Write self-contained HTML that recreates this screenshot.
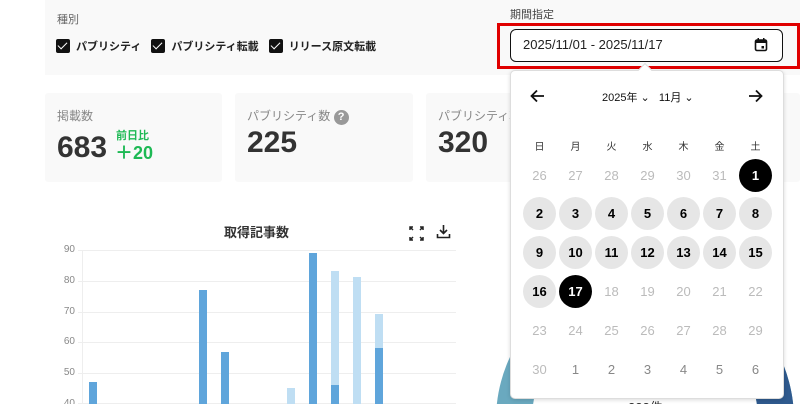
<!DOCTYPE html><html><head><meta charset="utf-8"><style>
html,body{margin:0;width:800px;height:404px;overflow:hidden}
body{background:#fff;font-family:"Liberation Sans","Noto Sans CJK JP",sans-serif;position:relative}
.a{position:absolute}
.cb{display:inline-block;width:14px;height:14px;background:#111;border-radius:2px;vertical-align:middle;position:relative;margin-right:6px}
.cb:after{content:"";position:absolute;left:4px;top:1px;width:4px;height:8px;border:solid #fff;border-width:0 1.5px 1.5px 0;transform:rotate(45deg)}
.lbl{font-size:11px;font-weight:bold;color:#222;vertical-align:middle;margin-right:10px}
.card{position:absolute;top:93px;height:89px;background:#f9f9f9;border-radius:3px;overflow:hidden}
.ct{font-size:12px;color:#888;position:absolute;left:12px;top:14px;white-space:nowrap}
.num{font-size:30px;font-weight:bold;color:#333;position:absolute;left:12px}
.d{position:absolute;width:33px;height:33px;border-radius:50%;text-align:center;line-height:33px;font-size:13px;color:#000}
.g{background:#e6e6e6}.k{background:#000;color:#fff}.m{color:#bbb}.n{color:#888}
.wd{position:absolute;font-size:10px;color:#333;width:33px;text-align:center;top:138px}
.yl{position:absolute;left:56px;font-size:10px;color:#888;width:19px;text-align:right}
.gl{position:absolute;left:78px;width:378px;height:1px;background:#eee}
.bar{position:absolute;width:8px;background:#5fa5db;bottom:0}
.lb{background:#bfdef3}
#wrap{position:absolute;left:0;top:0;width:800px;height:404px;overflow:hidden}
</style></head><body><div id="wrap">
<div class="a" style="left:45px;top:0;width:755px;height:75px;background:#f9f9f9"></div>
<div class="a" style="left:57px;top:11px;font-size:11px;color:#666">種別</div>
<div class="a" style="left:56px;top:37px;white-space:nowrap"><span class="cb"></span><span class="lbl">パブリシティ</span><span class="cb"></span><span class="lbl">パブリシティ転載</span><span class="cb"></span><span class="lbl">リリース原文転載</span></div>
<div class="a" style="left:510px;top:6px;font-size:11px;color:#444">期間指定</div>
<div class="a" style="left:497px;top:23px;width:297px;height:40px;border:3px solid #e00000"></div>
<div class="a" style="left:510px;top:29px;width:271px;height:31px;border:1.5px solid #111;border-radius:6px;background:#fff"></div>
<div class="a" style="left:523px;top:37px;font-size:13px;color:#222">2025/11/01 - 2025/11/17</div>
<svg class="a" style="left:754px;top:37px" width="14" height="15" viewBox="0 0 14 15"><rect x="1.5" y="3" width="11" height="10.5" rx="1.5" fill="none" stroke="#111" stroke-width="1.6"/><rect x="1.5" y="3" width="11" height="3" fill="#111"/><rect x="3.5" y="1" width="1.5" height="3" fill="#111"/><rect x="9" y="1" width="1.5" height="3" fill="#111"/><rect x="7.5" y="9" width="2.5" height="2.5" fill="#111"/></svg>

<div class="card" style="left:45px;width:177px"><div class="ct">掲載数</div><div class="num" style="top:38px">683</div><div class="a" style="left:71px;top:34px;font-size:11px;font-weight:bold;color:#1db954">前日比</div><div class="a" style="left:70px;top:46px;font-size:18px;font-weight:bold;color:#1db954">＋20</div></div>
<div class="card" style="left:235px;width:178px"><div class="ct">パブリシティ数 <span style="display:inline-block;width:15px;height:15px;border-radius:50%;background:#999;color:#fff;font-size:11px;text-align:center;line-height:15px;font-weight:bold">?</span></div><div class="num" style="top:33px">225</div></div>
<div class="card" style="left:426px;width:374px"><div class="ct">パブリシティ転載数</div><div class="num" style="top:33px">320</div></div>

<div class="a" style="left:224px;top:222px;font-size:13px;font-weight:bold;color:#333">取得記事数</div>
<svg class="a" style="left:409px;top:226px" width="15" height="15" viewBox="0 0 15 15" stroke="#222" stroke-width="1.5" fill="none"><path d="M1 4V1h3M1 1l3 3M14 4V1h-3M14 1l-3 3M1 11v3h3M1 14l3-3M14 11v3h-3M14 14l-3-3"/></svg>
<svg class="a" style="left:436px;top:224px" width="15" height="15" viewBox="0 0 15 15" stroke="#222" stroke-width="1.6" fill="none"><path d="M7.5 1v8M4 6l3.5 3.5L11 6M1.5 10v3.5h12V10"/></svg>
<div class="gl" style="top:250px"></div><div class="gl" style="top:281px"></div><div class="gl" style="top:312px"></div><div class="gl" style="top:342px"></div><div class="gl" style="top:373px"></div><div class="gl" style="top:403px"></div>
<div class="a" style="left:82px;top:250px;width:1px;height:154px;background:#eee"></div>
<div class="yl" style="top:244px">90</div><div class="yl" style="top:275px">80</div><div class="yl" style="top:306px">70</div><div class="yl" style="top:336px">60</div><div class="yl" style="top:367px">50</div><div class="yl" style="top:398px">40</div>
<div class="bar" style="left:89px;top:382px"></div>
<div class="bar" style="left:199px;top:290px"></div>
<div class="bar" style="left:221px;top:352px"></div>
<div class="bar lb" style="left:287px;top:388px"></div>
<div class="bar" style="left:309px;top:253px"></div>
<div class="bar lb" style="left:331px;top:271px"></div>
<div class="bar" style="left:331px;top:385px"></div>
<div class="bar lb" style="left:353px;top:277px"></div>
<div class="bar lb" style="left:375px;top:314px"></div>
<div class="bar" style="left:375px;top:348px"></div>

<svg class="a" style="left:480px;top:260px" width="320" height="144"><circle cx="165" cy="160" r="131" fill="none" stroke="#6aa9bf" stroke-width="36"/><path d="M165 29 A131 131 0 0 1 296 160" fill="none" stroke="#2f5a8e" stroke-width="36"/><path d="M50 100 A131 131 0 0 1 60 85" fill="none" stroke="#6dbb6b" stroke-width="36"/><rect x="75" y="125" width="183" height="30" fill="#fff"/><text x="148" y="152" font-size="13" fill="#333">222件</text></svg>

<div class="a" style="left:510px;top:70px;width:272px;height:327px;background:#fff;border:1px solid #ddd;border-radius:5px;box-shadow:0 1px 4px rgba(0,0,0,.15)"></div>
<div class="a" style="left:640px;top:65px;width:9px;height:9px;background:#fff;border-left:1px solid #ddd;border-top:1px solid #ddd;transform:rotate(45deg)"></div>
<svg class="a" style="left:530px;top:89px" width="15" height="14" viewBox="0 0 15 14" stroke="#111" stroke-width="1.8" fill="none"><path d="M14 7H2M7 1.5L1.5 7 7 12.5"/></svg>
<svg class="a" style="left:748px;top:89px" width="15" height="14" viewBox="0 0 15 14" stroke="#111" stroke-width="1.8" fill="none"><path d="M1 7h12M8 1.5L13.5 7 8 12.5"/></svg>
<div class="a" style="left:602px;top:89px;font-size:11px;color:#111">2025年 ⌄ &nbsp; 11月 ⌄</div>
<div class="wd" style="left:523px">日</div><div class="wd" style="left:559px">月</div><div class="wd" style="left:595px">火</div><div class="wd" style="left:631px">水</div><div class="wd" style="left:667px">木</div><div class="wd" style="left:703px">金</div><div class="wd" style="left:739px">土</div>
<div id="cal"></div>
</div>
<script>
var rows=[[26,27,28,29,30,31,1],[2,3,4,5,6,7,8],[9,10,11,12,13,14,15],[16,17,18,19,20,21,22],[23,24,25,26,27,28,29],[30,1,2,3,4,5,6]];
var ys=[159,197,236,275,314,353],h="";
rows.forEach(function(r,i){r.forEach(function(v,j){var c;
if(i==0)c=j==6?"k":"m";else if(i==1||i==2)c="g";else if(i==3)c=j==0?"g":j==1?"k":"m";else if(i==4)c="m";else c=j==0?"m":"n";
h+='<div class="d '+c+'" style="left:'+(523+36*j)+'px;top:'+ys[i]+'px'+((c=="g"||c=="k")?';font-weight:bold':'')+'">'+v+'</div>';});});
document.getElementById("cal").innerHTML=h;
</script>
</body></html>
